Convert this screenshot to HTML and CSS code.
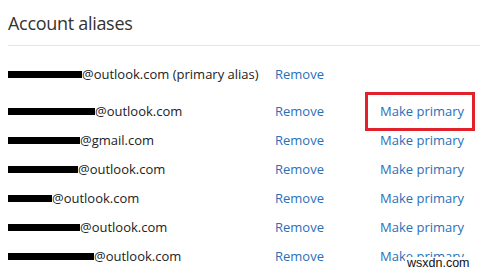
FILE: index.html
```html
<!DOCTYPE html>
<html lang="en">
<head>
  <meta charset="UTF-8" />
  <title>Account aliases</title>
  <link rel="stylesheet" href="styles.css">
</head>
<body>
  <section class="aliases">
    <h2>Account aliases</h2>

    <div class="alias-list">
      <div class="alias primary">
        <span class="addr"><span class="redact" style="width:74px"></span>@outlook.com (primary alias)</span>
        <a href="#" class="link">Remove</a>
        <span></span>
      </div>
      <div class="alias">
        <span class="addr"><span class="redact" style="width:87px"></span>@outlook.com</span>
        <a href="#" class="link">Remove</a>
        <a href="#" class="link make highlight">Make primary</a>
      </div>
      <div class="alias">
        <span class="addr"><span class="redact" style="width:72px"></span>@gmail.com</span>
        <a href="#" class="link">Remove</a>
        <a href="#" class="link make">Make primary</a>
      </div>
      <div class="alias">
        <span class="addr"><span class="redact" style="width:70px"></span>@outlook.com</span>
        <a href="#" class="link">Remove</a>
        <a href="#" class="link make">Make primary</a>
      </div>
      <div class="alias">
        <span class="addr"><span class="redact" style="width:44px"></span>@outlook.com</span>
        <a href="#" class="link">Remove</a>
        <a href="#" class="link make">Make primary</a>
      </div>
      <div class="alias">
        <span class="addr"><span class="redact" style="width:72px"></span>@outlook.com</span>
        <a href="#" class="link">Remove</a>
        <a href="#" class="link make">Make primary</a>
      </div>
      <div class="alias">
        <span class="addr"><span class="redact" style="width:86px"></span>@outlook.com</span>
        <a href="#" class="link">Remove</a>
        <a href="#" class="link make">Make primary</a>
      </div>
    </div>
  </section>

  <div class="watermark">wsxdn.com</div>
</body>
</html>
```

FILE: styles.css
```css
body {
  margin: 0;
  font-family: 'Open Sans', 'Noto Sans', sans-serif;
  background: #fff;
  color: #222;
  overflow: hidden;
}

.aliases {
  padding: 0 0 0 8px;
}

.aliases h2 {
  margin: 0;
  padding-top: 10px;
  height: 35px;
  font-size: 18px;
  letter-spacing: -0.3px;
  font-weight: 400;
  color: #333;
  border-bottom: 1px solid #e6e6e6;
  line-height: 26px;
}

.alias-list {
  padding-top: 13px;
}

/* one row: address | remove | make primary */
.alias {
  display: grid;
  grid-template-columns: 267px 105px auto;
  align-items: center;
  height: 29px;
  font-size: 13px;
}

.alias.primary {
  margin-bottom: 8px;
}

.addr {
  display: flex;
  align-items: center;
  white-space: nowrap;
}

.redact {
  display: inline-block;
  height: 7px;
  background: #000;
  margin-top: 1px;
}

.link {
  color: #2a6fb7;
  text-decoration: none;
}

.make {
  justify-self: start;
}

.highlight {
  position: relative;
}

.highlight::after {
  content: "";
  position: absolute;
  left: -15px;
  right: -11px;
  top: -10px;
  bottom: -11px;
  border: 3px solid #e1212b;
}

/* site watermark, sits over the last link */
.watermark {
  position: absolute;
  left: 405px;
  top: 257px;
  padding: 0 2px;
  background: #fff;
  color: #111;
  font-size: 12.5px;
  line-height: 13px;
  font-family: 'Liberation Sans', Arial, sans-serif;
}
```
